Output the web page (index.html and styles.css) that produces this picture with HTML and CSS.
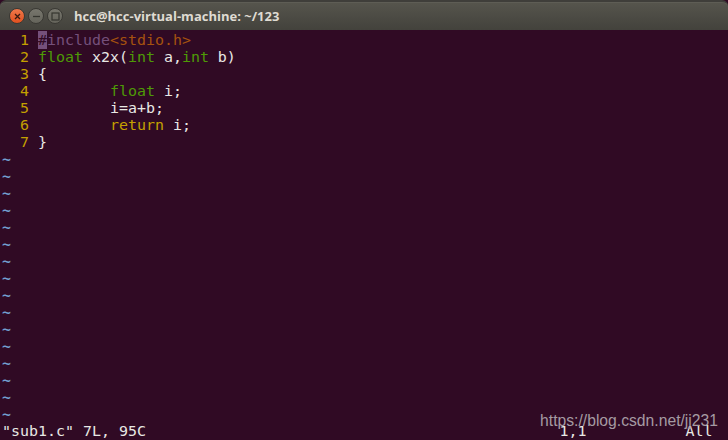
FILE: index.html
```html
<!DOCTYPE html>
<html>
<head>
<meta charset="utf-8">
<title>vim</title>
<link rel="stylesheet" href="styles.css">
</head>
<body>
<div class="window">
  <header class="titlebar">
    <div class="controls">
      <span class="btn close"><svg width="9" height="9" viewBox="0 0 9 9"><path d="M2 2l5 5M7 2l-5 5" stroke="#3a1a10" stroke-width="1.3" fill="none"/></svg></span>
      <span class="btn"><svg width="9" height="9" viewBox="0 0 9 9"><path d="M1 4.5h7" stroke="#35352f" stroke-width="1.3" fill="none"/></svg></span>
      <span class="btn"><svg width="9" height="9" viewBox="0 0 9 9"><rect x="1" y="1" width="7" height="7" stroke="#35352f" stroke-width="1.2" fill="none"/></svg></span>
    </div>
    <div class="title">hcc@hcc-virtual-machine: ~/123</div>
  </header>
  <main class="term">
    <div class="row"><span class="ln">  1 </span><span class="cursor">#</span><span class="pre">include</span><span class="inc">&lt;stdio.h&gt;</span></div>
    <div class="row"><span class="ln">  2 </span><span class="type">float</span> x2x(<span class="type">int</span> a,<span class="type">int</span> b)</div>
    <div class="row"><span class="ln">  3 </span>{</div>
    <div class="row"><span class="ln">  4 </span>        <span class="type">float</span> i;</div>
    <div class="row"><span class="ln">  5 </span>        i=a+b;</div>
    <div class="row"><span class="ln">  6 </span>        <span class="kw">return</span> i;</div>
    <div class="row"><span class="ln">  7 </span>}</div>
    <div class="row tilde">~</div>
    <div class="row tilde">~</div>
    <div class="row tilde">~</div>
    <div class="row tilde">~</div>
    <div class="row tilde">~</div>
    <div class="row tilde">~</div>
    <div class="row tilde">~</div>
    <div class="row tilde">~</div>
    <div class="row tilde">~</div>
    <div class="row tilde">~</div>
    <div class="row tilde">~</div>
    <div class="row tilde">~</div>
    <div class="row tilde">~</div>
    <div class="row tilde">~</div>
    <div class="row tilde">~</div>
    <div class="row tilde">~</div>
    <div class="row">"sub1.c" 7L, 95C                                              1,1           All</div>
  </main>
  <div class="watermark">https://blog.csdn.net/jj231</div>
</div>
</body>
</html>
```
FILE: styles.css
```css
html, body {
  margin: 0;
  padding: 0;
  width: 728px;
  height: 440px;
  overflow: hidden;
  background: #300a24;
}
.window {
  position: relative;
  width: 728px;
  height: 440px;
  display: flex;
  flex-direction: column;
  overflow: hidden;
}
.titlebar {
  flex: none;
  height: 30px;
  box-sizing: border-box;
  border-top: 2px solid #3f3e3a;
  border-radius: 6px 6px 0 0;
  background: linear-gradient(#56554d, #43423c);
  display: flex;
  align-items: center;
  padding: 0 0 0 9px;
  box-shadow: inset 0 1px 0 #5e5d55;
}
.controls {
  display: flex;
  gap: 3px;
}
.btn {
  box-sizing: border-box;
  width: 16px;
  height: 16px;
  border-radius: 50%;
  background: linear-gradient(#77766d, #65645b);
  border: 1px solid #3a3934;
  display: flex;
  align-items: center;
  justify-content: center;
}
.close {
  background: linear-gradient(#f0784a, #e0501f);
}
.title {
  margin-left: 11px;
  font-family: "Open Sans", sans-serif;
  font-weight: 700;
  font-size: 13px;
  color: #dfdbd2;
  white-space: nowrap;
}
.term {
  flex: 1;
  padding: 2px 0 0 2px;
  font-family: "DejaVu Sans Mono", monospace;
  font-size: 14.95px;
  line-height: 17px;
  color: #e8e8e4;
}
.row {
  height: 17px;
  white-space: pre;
}
.ln { color: #c4a000; }
.cursor { background: #75507b; color: #300a24; }
.pre { color: #75507b; }
.inc { color: #a5520f; }
.type { color: #4e9a06; }
.kw { color: #c4a000; }
.tilde { color: #729fcf; font-weight: bold; }
.watermark {
  position: absolute;
  right: 10px;
  bottom: 11px;
  font-family: "Liberation Sans", sans-serif;
  font-size: 15.7px;
  line-height: 17px;
  color: #a59aa2;
  white-space: nowrap;
}
```
